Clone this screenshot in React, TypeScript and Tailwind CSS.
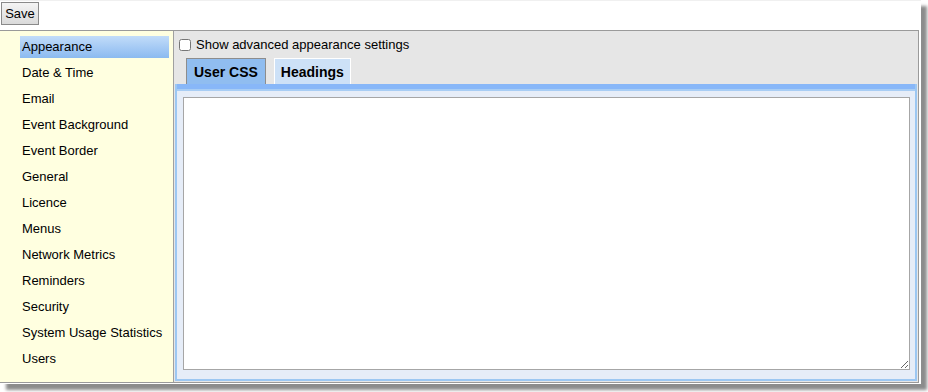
import { useState } from "react";

const sections = [
  "Appearance",
  "Date & Time",
  "Email",
  "Event Background",
  "Event Border",
  "General",
  "Licence",
  "Menus",
  "Network Metrics",
  "Reminders",
  "Security",
  "System Usage Statistics",
  "Users",
];

export default function App() {
  const [selected, setSelected] = useState("Appearance");
  const [tab, setTab] = useState("User CSS");
  const [advanced, setAdvanced] = useState(false);

  return (
    <div className="w-[928px] h-[392px] bg-white font-['Liberation_Sans',Arial,sans-serif] text-[13px] text-black">
      <div className="w-[921px] h-[384px] bg-white border-t border-[#f0f0f0] shadow-[6px_6px_3px_rgba(0,0,0,0.45)]">
        {/* barra superior */}
        <div className="h-[29px] pl-[1px] pt-[1px]">
          <button className="h-[23px] w-[38px] border border-[#8a8a8a] bg-gradient-to-b from-[#f4f4f4] to-[#dadada] text-[13px] leading-[20px]">
            Save
          </button>
        </div>

        <div className="flex w-[919px] h-[353px] border-t border-b border-r border-[#9a9a9a]">
          {/* menu lateral */}
          <div className="w-[174px] shrink-0 bg-[#ffffe0] border-r border-[#a0a0a0] pt-[3px]">
            {sections.map((s) => (
              <div
                key={s}
                onClick={() => setSelected(s)}
                className="h-[26px] flex items-center pl-[20px] pr-[4px] cursor-pointer"
              >
                <div
                  className={
                    selected === s
                      ? "w-full h-[22px] flex items-center pl-[2px] bg-gradient-to-b from-[#c2dcf9] to-[#8bbaf0] whitespace-nowrap"
                      : "w-full h-[22px] flex items-center pl-[2px] whitespace-nowrap"
                  }
                >
                  {s}
                </div>
              </div>
            ))}
          </div>

          {/* contenido */}
          <div className="flex-1 bg-[#e6e6e6] flex flex-col px-[1px] pb-[1px]">
            <label className="flex items-center h-[26px] pl-[4px] mt-[1px] gap-[5px]">
              <input
                type="checkbox"
                checked={advanced}
                onChange={(e) => setAdvanced(e.target.checked)}
                className="w-[12px] h-[12px] m-0"
              />
              <span>Show advanced appearance settings</span>
            </label>

            <div className="flex items-end h-[26px] pl-[11px] gap-[8px]">
              {["User CSS", "Headings"].map((t) => (
                <button
                  key={t}
                  onClick={() => setTab(t)}
                  className={
                    tab === t
                      ? "h-[26px] px-[7px] font-bold bg-[#90bdf0] border border-b-0 border-[#8d8d8d] text-[14px] leading-[24px]"
                      : "h-[26px] px-[6px] font-bold bg-[#cde1f7] border border-b-0 border-white text-[14px] leading-[24px]"
                  }
                >
                  {t}
                </button>
              ))}
            </div>

            <div className="flex-1 flex flex-col border-2 border-t-0 border-[#9cc7f2] bg-[#e6edf8]">
              <div className="h-[5px] bg-[#88b7f8]" />
              <div className="h-[2px] bg-[#a8cdf4]" />
              <div className="flex-1 pl-[6px] pr-[5px] pt-[6px] pb-[9px]">
                <textarea className="block w-full h-full bg-white border border-[#a6a6a6] resize-y outline-none" />
              </div>
            </div>
          </div>
        </div>
      </div>
    </div>
  );
}
